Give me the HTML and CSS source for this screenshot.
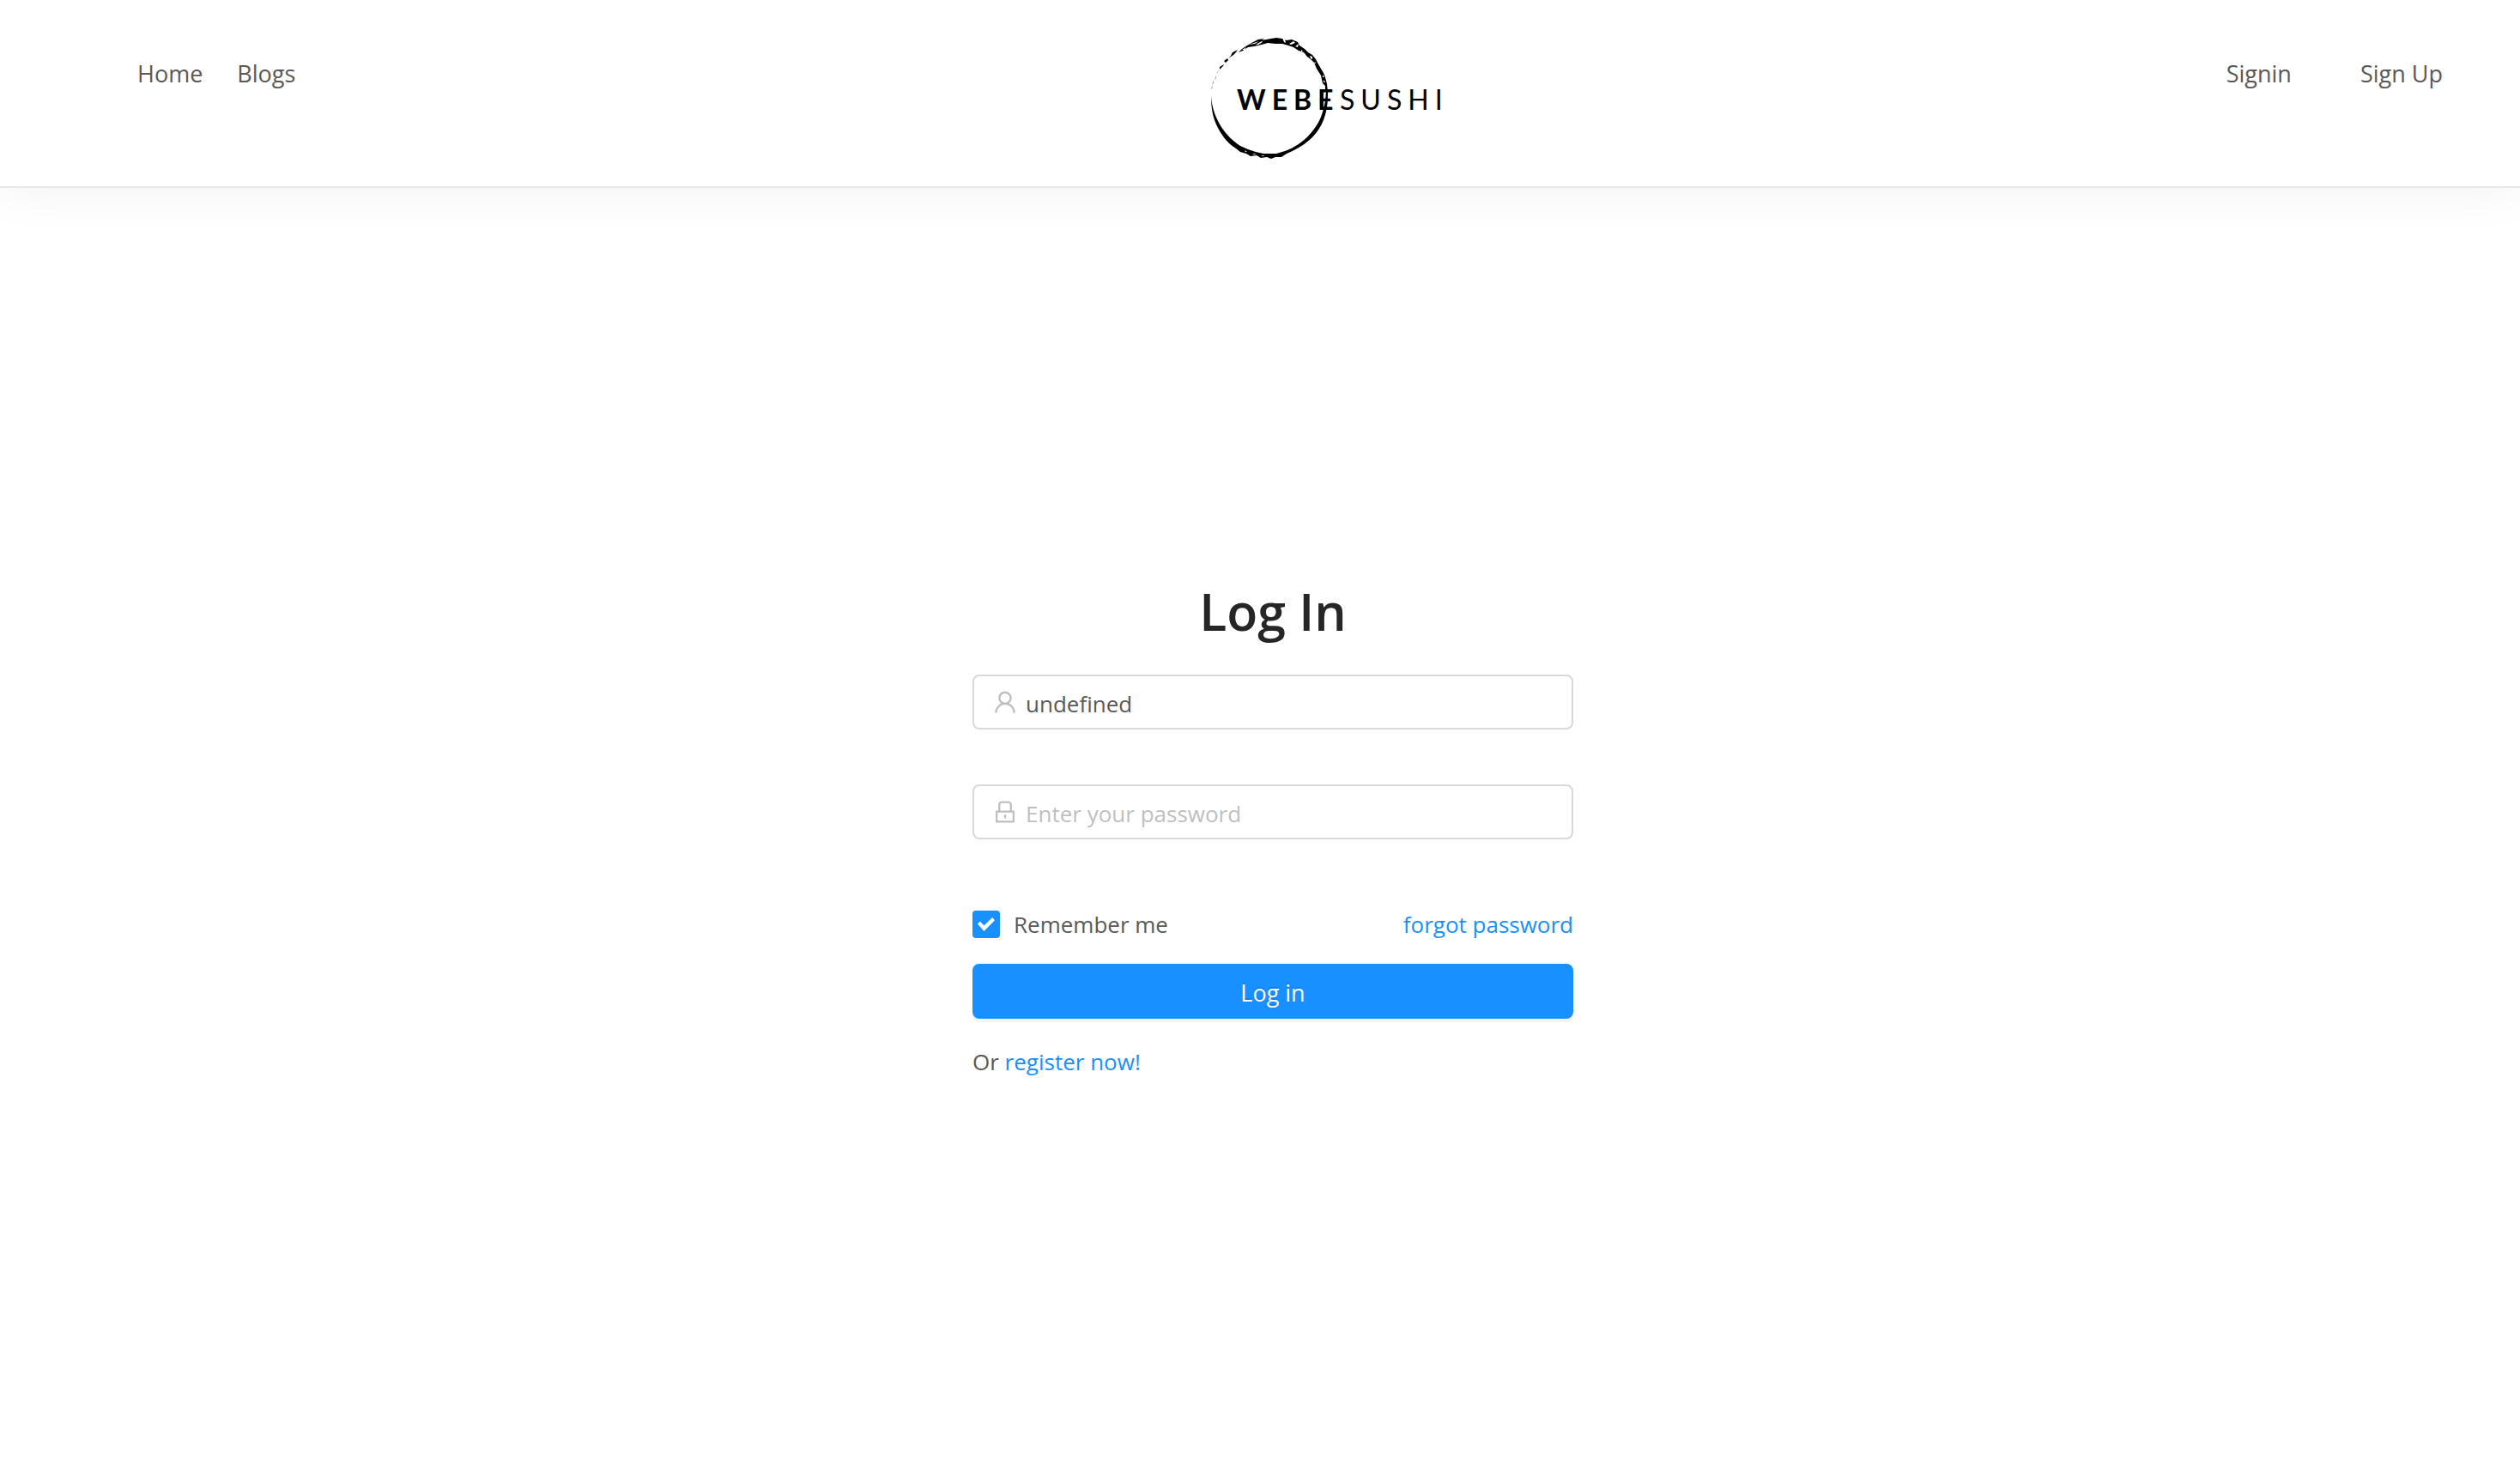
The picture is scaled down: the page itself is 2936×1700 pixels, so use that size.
FILE: index.html
```html
<!DOCTYPE html>
<html lang="en">
<head>
<meta charset="utf-8">
<title>Webesushi - Log In</title>
<link rel="stylesheet" href="styles.css">
</head>
<body>
<header class="header">
  <nav class="nav nav-main">
    <a href="#">Home</a>
    <a href="#">Blogs</a>
  </nav>
  <a class="logo" href="#" aria-label="Webesushi">
    <svg viewBox="0 0 310 170" width="310" height="170">
      <path d="M70 19L76 16L83 15L80 17L91 15L97 14L104 15L109 17L115 16L122 19L124 23L130 27L134 31L139 34L143 39L145 43L149 50L152 55L154 60L156 68L157 77L154 77L154 70L151 67L149 58L144 50L141 43L137 39L133 36L129 31L123 29L117 25L111 23L104 21L96 21L87 20L80 22L71 24L64 25L58 29L53 31L57 27L63 23Z"/>
      <path d="M155 76L157 76C158 100 151 118 139 130C130 139 119 145 109 149L103 153L96 153L91 155L86 153L79 154L74 151L67 152L62 149L55 147L50 143C40 137 32 126 27 115C23 106 21 96 21 82C22 97 27 108 33 118C39 127 46 134 55 140L64 144L73 147L82 149L97 149L107 146C119 142 131 133 139 123C149 111 154 96 155 76Z"/>
      <path d="M52 28L46 31L44 35L41 38L47 34L50 31ZM40 38L36 41L38 43L41 40ZM36 45L31 48L31 51L35 47Z"/>
      <path class="faint" d="M30 51L27 56L29 54ZM27 58L25 63L27 61ZM24 63L22 69L24 67ZM22 70L21 75L23 71Z"/>
      <path class="fleck" d="M65 22L71 20L77 18L72 21ZM73 22L80 18L81 19L76 22ZM57 28L62 25L60 28ZM104 14L106 19L108 20L107 15ZM112 21L117 18L119 20L114 22ZM119 24L123 21L122 25ZM126 28L128 30L126 30ZM136 35L139 36L139 39L137 38ZM142 42L143 44L141 44ZM151 57L153 60L151 60ZM152 63L154 66L152 66ZM60 145L63 147L61 147ZM69 149L74 149L71 150ZM79 151L83 151L82 152Z"/>
      <text class="logo-bold" x="51" y="98">WEBE</text>
      <text class="logo-thin" x="171" y="98">SUSHI</text>
    </svg>
  </a>
  <nav class="nav nav-user">
    <a href="#">Signin</a>
    <a href="#">Sign Up</a>
  </nav>
</header>
<main class="main">
  <form class="login">
    <h1 class="title">Log In</h1>
    <label class="field">
      <svg viewBox="64 64 896 896" width="28" height="28" aria-hidden="true"><path d="M858.500 763.600a374 374 0 0 0-80.600-119.500 375.630 375.630 0 0 0-119.500-80.600c-.4-.2-.8-.3-1.200-.5C719.500 518 760 444.700 760 362c0-137-111-248-248-248S264 225 264 362c0 82.700 40.500 156 102.800 201.100-.4.2-.8.300-1.200.5-44.800 18.900-85 46-119.500 80.600a375.630 375.630 0 0 0-80.600 119.500A371.700 371.700 0 0 0 136 901.800a8 8 0 0 0 8 8.200h60c4.400 0 7.900-3.500 8-7.800 2-77.200 33-149.500 87.800-204.300 56.700-56.700 132-87.900 212.200-87.900s155.500 31.200 212.200 87.900C779 752.700 810 825 812 902.200c.1 4.400 3.600 7.800 8 7.800h60a8 8 0 0 0 8-8.200c-1-47.800-10.900-94.300-29.500-138.200zM512 534c-45.900 0-89.100-17.900-121.600-50.400S340 407.900 340 362c0-45.900 17.900-89.100 50.400-121.600S466.100 190 512 190s89.100 17.900 121.600 50.400S684 316.100 684 362c0 45.900-17.900 89.100-50.400 121.600S557.900 534 512 534z"/></svg>
      <input type="text" value="undefined" aria-label="Username">
    </label>
    <label class="field">
      <svg viewBox="64 64 896 896" width="28" height="28" aria-hidden="true"><path d="M832 464h-68V240c0-70.700-57.300-128-128-128H388c-70.700 0-128 57.300-128 128v224h-68c-17.700 0-32 14.300-32 32v384c0 17.700 14.300 32 32 32h640c17.700 0 32-14.300 32-32V496c0-17.700-14.300-32-32-32zM332 240c0-30.900 25.100-56 56-56h248c30.900 0 56 25.100 56 56v224H332V240zm460 600H232V536h560v304zM484 701v53c0 4.400 3.600 8 8 8h40c4.400 0 8-3.600 8-8v-53a48.010 48.010 0 1 0-56 0z"/></svg>
      <input type="password" placeholder="Enter your password" aria-label="Password">
    </label>
    <div class="options">
      <label class="remember"><input type="checkbox" checked>Remember me</label>
      <a href="#">forgot password</a>
    </div>
    <button class="submit" type="submit">Log in</button>
    <p class="register">Or <a href="#">register now!</a></p>
  </form>
</main>
</body>
</html>
```
FILE: styles.css
```css
* { box-sizing: border-box; }
body {
  margin: 0;
  background: #fff;
  color: #595959;
  font: 26px/42px "Segoe UI", "Open Sans", sans-serif;
}
a { color: #1890ff; text-decoration: none; }

.header {
  display: grid;
  grid-template-columns: 1fr 394px 1fr;
  padding: 30px 90px 17px 160px;
  border-bottom: 2px solid #e8e8e8;
  box-shadow: 0 0 60px #f3f1f1;
}
.nav { display: flex; gap: 40px; padding-top: 35px; font-size: 27px; }
.nav a { color: #595959; }
.nav-user { justify-content: flex-end; gap: 80px; }
.logo { display: block; height: 170px; padding-left: 84px; }
.logo text { font-family: Lato, sans-serif; font-size: 32px; }
.logo .logo-bold { font-weight: 700; letter-spacing: 7px; }
.logo .logo-thin { font-weight: 400; letter-spacing: 7px; }
.logo .faint { fill: #999; }
.logo .fleck { fill: #fff; }

.main { padding: 453px 0 0 30px; }
.login { width: 700px; margin: 0 auto; }
.title {
  margin: 0 0 34px;
  color: #262626;
  font-size: 59px;
  font-weight: 600;
  line-height: 80px;
  text-align: center;
}
.field {
  display: flex;
  align-items: center;
  gap: 10px;
  height: 64px;
  margin-bottom: 64px;
  padding: 0 22px;
  border: 2px solid #d9d9d9;
  border-radius: 8px;
}
.field svg { fill: #bfbfbf; }
.field input {
  flex: 1;
  min-width: 0;
  padding: 4px 0 0;
  border: 0;
  outline: 0;
  background: none;
  color: #595959;
  font: inherit;
}
.field input::placeholder { color: #bfbfbf; opacity: 1; }
.options { display: flex; justify-content: space-between; margin: 78px 0 25px; }
.remember { display: flex; align-items: center; gap: 16px; }
.remember input {
  appearance: none;
  display: grid;
  place-items: center;
  width: 32px;
  height: 32px;
  margin: 0;
  border-radius: 4px;
  background: #1890ff;
}
.remember input:checked::after {
  content: "";
  width: 20px;
  height: 16px;
  background: #fff;
  clip-path: polygon(0 47%, 14% 28%, 37% 59%, 86% 0, 100% 20%, 37% 100%);
}
.submit {
  display: block;
  width: 100%;
  height: 64px;
  padding: 4px 0 0;
  border: 0;
  border-radius: 8px;
  background: #1890ff;
  box-shadow: 0 4px 0 rgba(0, 0, 0, 0.045);
  color: #fff;
  font: inherit;
  font-size: 27px;
  text-shadow: 0 -2px 0 rgba(0, 0, 0, 0.12);
}
.register { margin: 29px 0 0; }
```
